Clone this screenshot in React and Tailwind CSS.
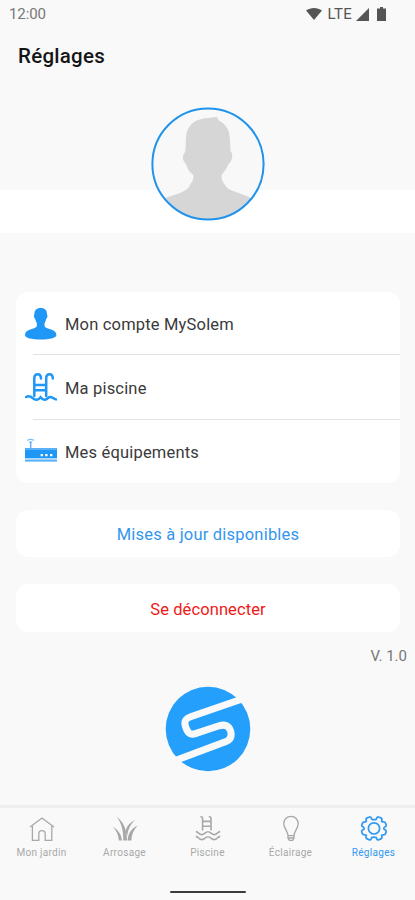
const TABS = [
  { key: 'garden',   label: 'Mon jardin', Icon: HomeIcon },
  { key: 'watering', label: 'Arrosage',   Icon: GrassIcon },
  { key: 'pool',     label: 'Piscine',    Icon: PoolIcon },
  { key: 'lighting', label: 'Éclairage',  Icon: BulbIcon },
  { key: 'settings', label: 'Réglages',   Icon: GearIcon },
];

const MENU = [
  { key: 'account', label: 'Mon compte MySolem', Icon: PersonIcon },
  { key: 'pool',    label: 'Ma piscine',         Icon: LadderIcon },
  { key: 'devices', label: 'Mes équipements',    Icon: RouterIcon },
];

function PersonIcon() {
  return (
    <svg className="h-8 w-8" viewBox="0 0 32 32" fill="#1f97f6">
      <path d="M15.7 0C11.2 0 9.2 2.6 9.4 6.4C8.4 7.4 9 10 10.2 11C10.6 13 11.4 14.3 11.8 15.3C12.2 18.6 11.6 19.4 9.2 20.2C5 21.6 0 22.2 0 27.2C0 30 7 31.4 15.7 31.4S31.4 30 31.4 27.2C31.4 22.2 26.4 21.6 22.2 20.2C19.8 19.4 19.2 18.6 19.6 15.3C20 14.3 20.8 13 21.2 11C22.4 10 23 7.4 22 6.4C22.2 2.6 20.2 0 15.7 0Z" />
    </svg>
  );
}

function LadderIcon() {
  return (
    <svg className="h-8 w-8" viewBox="0 0 32 32" fill="none" stroke="#1f97f6" strokeWidth="2.5" strokeLinecap="round">
      <path d="M9.3 24V6.5C9.3 .8 16 .8 16 6.5M21.2 24V6.5C21.2 .8 27.8 .8 27.8 6.5M9.3 13H21.2M9.3 18.2H21.2" />
      <path d="M1 25C4 23.4 6 24.2 8 26.4C10.4 28.6 13.4 28.2 15.6 25.2C18 28.2 20.6 28.6 23.2 25.8C25.6 23.4 27.6 26.4 31 27.4" />
    </svg>
  );
}

function RouterIcon() {
  return (
    <svg className="h-8 w-8" viewBox="0 0 32 32" fill="#1f97f6">
      <path d="M2.2 4.6Q5.6 2 9 4.6M4 6.6Q5.6 5.2 7.2 6.6" fill="none" stroke="#7cc0f8" strokeWidth="1.3" />
      <rect x="5" y="6" width="1.4" height="6" fill="#58aff8" />
      <rect y="12" width="32" height="1.4" fill="#58aff8" />
      <rect y="13.4" width="32" height="8.8" />
      <rect y="22.2" width="32" height="1.6" fill="#a9d6fb" />
      <rect y="23.8" width="32" height="1.8" fill="#58aff8" />
      <path d="M15.6 18H18V20.2H15.6ZM20.2 18H22.6V20.2H20.2ZM25 18H27.4V20.2H25Z" fill="#fff" />
    </svg>
  );
}

function HomeIcon() {
  return (
    <svg className="h-7 w-7" viewBox="0 0 28 28" fill="none" stroke="currentColor" strokeWidth="1.3">
      <path d="M2 12L14 3L26 12M4.4 11V25.3H10.8V18.5C10.8 14.6 17.2 14.6 17.2 18.5V25.3H23.8V11" />
    </svg>
  );
}

function GrassIcon() {
  return (
    <svg className="h-7 w-7" viewBox="0 0 28 28" fill="currentColor">
      <path d="M5.6 1.8C12.4 6.6 16 15 16 25.6H12.2C12.6 16 10.6 8 5.6 1.8Z" />
      <path d="M1.6 11.4C6.6 14.2 10.4 19 11 25.6H7.8C7.6 20 5.6 15.6 1.6 11.4Z" />
      <path d="M24 5C18.4 8 14.8 12 14.8 17L16.4 21C16.8 14 19.8 9.4 24 5Z" />
      <path d="M26.6 10.4C20.4 13.2 16.8 18.6 16.6 25.6H20.4C20.4 19.6 22.6 15 26.6 10.4Z" />
    </svg>
  );
}

function PoolIcon() {
  return (
    <svg className="h-7 w-7" viewBox="0 0 28 28" fill="none" stroke="currentColor" strokeWidth="1.6">
      <path d="M6.4 1.8H7C8.2 1.8 8.6 2.6 8.6 4V15.4M14.8 1.8H15.4C16.6 1.8 17 2.6 17 4V15.4M8.6 6.4H17M8.6 11.2H17" />
      <path d="M1.8 16.6C4.8 16.8 4.6 19.6 7.8 19.6S11 16.8 14 16.8S17 19.6 20.2 19.6S23.2 16.8 26.2 16.6M1.8 21.4C4.8 21.6 4.6 24.6 7.8 24.6S11 21.8 14 21.8S17 24.6 20.2 24.6S23.2 21.6 26.2 21.4" />
    </svg>
  );
}

function BulbIcon() {
  return (
    <svg className="h-7 w-7" viewBox="0 0 28 28" fill="none" stroke="currentColor" strokeWidth="1.3">
      <path d="M11 20.6C11 16 6.8 13.6 6.8 8.8C6.8 4.4 9.8 1.4 14 1.4S21.2 4.4 21.2 8.8C21.2 13.6 17 16 17 20.6ZM11 20.6V23.2L12.4 25.4H15.6L17 23.2V20.6M11 23H17" />
    </svg>
  );
}

function GearIcon() {
  return (
    <svg className="h-7 w-7" viewBox="0 0 28 28" fill="none" stroke="currentColor" strokeWidth="1.7" strokeLinejoin="round">
      <circle cx="14" cy="13.4" r="5.6" />
      <path d="M11.6 4.2C11.6 2.6 10.4 1.4 8.8 2.2L7.2 2.9C5.6 3.6 5.8 5 6.4 6.4C5.4 7.4 4.2 6.4 3 7.4C1.8 9 1.4 10.8 2.2 11.4C3.2 12.2 4.2 12.2 4.2 13.4S3.2 14.6 2.2 15.4C1.4 16 1.8 17.8 3 19.4C4.2 20.4 5.4 19.4 6.4 20.4C5.8 21.8 5.6 23.2 7.2 23.9L8.8 24.6C10.4 25.4 11.6 24.2 11.6 22.6Q14 21.6 16.4 22.6C16.4 24.2 17.6 25.4 19.2 24.6L20.8 23.9C22.4 23.2 22.2 21.8 21.6 20.4C22.6 19.4 23.8 20.4 25 19.4C26.2 17.8 26.6 16 25.8 15.4C24.8 14.6 23.8 14.6 23.8 13.4S24.8 12.2 25.8 11.4C26.6 10.8 26.2 9 25 7.4C23.8 6.4 22.6 7.4 21.6 6.4C22.2 5 22.4 3.6 20.8 2.9L19.2 2.2C17.6 1.4 16.4 2.6 16.4 4.2Q14 5.2 11.6 4.2Z" />
    </svg>
  );
}

function Avatar() {
  return (
    <svg className="h-[114px] w-[114px]" viewBox="0 0 114 114">
      <defs>
        <clipPath id="avatar">
          <circle cx="57" cy="57" r="56" />
        </clipPath>
      </defs>
      <circle cx="57" cy="57" r="56" fill="#f8f8f8" />
      <path
        clipPath="url(#avatar)"
        fill="#d6d6d6"
        d="M10 93C20 88 34 86 38.3 79.7C40 75 43 74 42.3 68C38 65 36 61 35 57C32.5 55 30.5 50 33.2 46.5C34.8 44 34.4 41 34.8 38C34.6 31 35 24 39 19C43 13 51 11.5 57 11C61 10.8 63 10.5 65.7 9.8L67.8 13.5C73 16 77 20.5 78 26C79.5 32 79 38 79.5 44C82.5 47 81.5 54 77.5 57C76 61 73 65 70.7 68C70 74 73 76 75.5 80C80 85 92 86 104 93V114H10Z"
      />
      <circle cx="57" cy="57" r="55.6" fill="none" stroke="#1f93ec" strokeWidth="2" />
    </svg>
  );
}

function Logo() {
  return (
    <svg className="h-[86px] w-[86px]" viewBox="0 0 86 86">
      <circle cx="43" cy="43" r="42.3" fill="#24a0fc" />
      <path
        d="M80 12L25.6 30.8C20.6 32.6 19 35.4 20.4 40C22.2 46.6 25 49.4 30.4 47.6L54 39.8C60 38 64 39.8 65.6 45C67 50 65.8 53.6 61 55.6L9 75"
        fill="none"
        stroke="#f9f9f9"
        strokeWidth="7"
      />
    </svg>
  );
}

function StatusBar() {
  return (
    <div className="flex h-7 items-center justify-between pr-[29px] pl-[9px] text-[15px] text-[#777]">
      <span className="tracking-[-0.1px]">12:00</span>
      <div className="flex items-center text-[#555]">
        <svg className="h-3 w-4" viewBox="0 0 16 12" fill="currentColor">
          <path d="M0 2.6C4.6-.8 11.4-.8 16 2.6L8 12Z" />
        </svg>
        <span className="ml-1.5 tracking-[0.3px]">LTE</span>
        <svg className="ml-1 h-[13px] w-[13px]" viewBox="0 0 13 13" fill="currentColor">
          <path d="M13 0V13H0Z" />
        </svg>
        <svg className="ml-2 h-3.5 w-[9px]" viewBox="0 0 9 14" fill="currentColor">
          <path d="M3 0H6V1.4H9V14H0V1.4H3Z" />
        </svg>
      </div>
    </div>
  );
}

export default function App() {
  return (
    <div className="flex h-[900px] w-[415px] flex-col overflow-hidden bg-[#f9f9f9] font-['Roboto',sans-serif] text-[#3a3a3a]">
      <StatusBar />
      <h1 className="h-[79px] pt-[14px] pl-[18px] text-[20.5px] leading-7 font-medium tracking-[0.25px] text-[#151515]">Réglages</h1>

      {/* Profile picture over the white band */}
      <div className="flex h-[126px] justify-center bg-linear-to-b from-transparent from-[83px] to-white to-[83px] pl-px">
        <Avatar />
      </div>

      <div className="mr-[15px] ml-4 mt-[59px] rounded-xl bg-white pb-px">
        {MENU.map(({ key, label, Icon }, i) => (
          <div key={key}>
            {i > 0 && <div className="ml-[17px] h-px bg-[#e2e2e2]" />}
            <button className={`flex w-full items-center pt-0.5 pl-[9px] text-[16.5px] tracking-[0.18px] ${i === 1 ? 'h-16' : 'h-[62px]'}`}>
              <Icon />
              <span className="ml-2 pt-0.5">{label}</span>
            </button>
          </div>
        ))}
      </div>

      <button className="mr-[15px] ml-4 mt-[27px] h-[47px] shrink-0 rounded-xl bg-white pt-1 text-[16.5px] tracking-[0.2px] text-[#3296ee]">
        Mises à jour disponibles
      </button>
      <button className="mr-[15px] ml-4 mt-[27px] h-12 shrink-0 rounded-xl bg-white pt-1 text-[16.5px] tracking-[0.1px] text-[#f01818]">
        Se déconnecter
      </button>
      <p className="mt-[14px] pr-2 text-right text-[15px] leading-5 text-[#777]">V. 1.0</p>

      <div className="mt-5 flex justify-center">
        <Logo />
      </div>

      <nav className="mt-auto flex h-[95px] shrink-0 flex-col border-t-[3px] border-[#efefef]">
        <div className="grid grid-cols-5 pt-[7px]">
          {TABS.map(({ key, label, Icon }) => (
            <button
              key={key}
              className={`flex flex-col items-center text-[10px] leading-3 tracking-[0.3px] ${
                key === 'settings' ? 'text-[#3298f0]' : 'text-[#a8a8a8]'
              }`}
            >
              <Icon />
              <span className="mt-1">{label}</span>
            </button>
          ))}
        </div>
        <div className="mx-auto mt-auto mb-[7px] h-0.5 w-[76px] rounded-full bg-[#3c3c3c]" />
      </nav>
    </div>
  );
}
